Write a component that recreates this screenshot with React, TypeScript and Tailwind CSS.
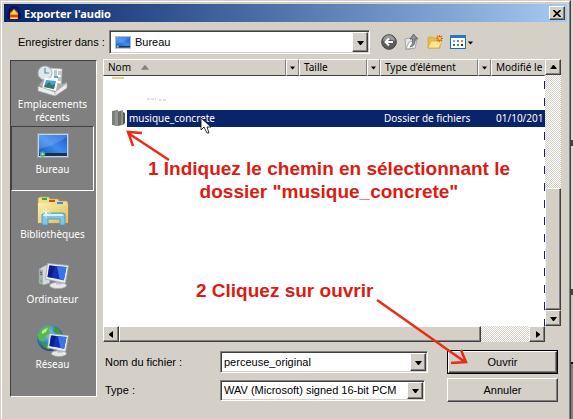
import React from 'react';

const raised =
  'bg-[#d4d0c8] border border-t-white border-l-white border-r-[#404040] border-b-[#404040] shadow-[inset_-1px_-1px_0_#808080]';
const sunken =
  'bg-white border border-t-[#808080] border-l-[#808080] border-r-white border-b-white shadow-[inset_1px_1px_0_#404040,inset_-1px_-1px_0_#d4d0c8]';
const track = 'bg-[repeating-conic-gradient(#ffffff_0_25%,#d4d0c8_0_50%)] bg-[length:2px_2px]';
const uiFont = "font-['Liberation_Sans',Arial,sans-serif] text-[11px]";
const listFont = "font-['Noto_Sans',Tahoma,sans-serif] text-[10px]";

type Direction = 'up' | 'down' | 'left' | 'right';

const trianglePaths: Record<Direction, string> = {
  up: 'M0 5h7L4 1H3z',
  down: 'M0 2h7L4 6H3z',
  left: 'M5 0v7L1 4V3z',
  right: 'M2 0v7l4-3V3z',
};

const Triangle = ({ dir, className = 'w-[7px] h-[7px]' }: { dir: Direction; className?: string }) => (
  <svg viewBox="0 0 7 7" className={className} aria-hidden="true">
    <path d={trianglePaths[dir]} fill="currentColor" />
  </svg>
);

const AudacityIcon = () => (
  <svg viewBox="0 0 14 14" className="w-[14px] h-[14px]" aria-hidden="true">
    <path d="M2 9V6a5 5 0 0 1 10 0v3" fill="none" stroke="#10105a" strokeWidth="2" />
    <path d="M0 7h3v6H1.500L0 11zM14 7h-3v6h1.500L14 11z" fill="#10105a" />
    <path d="M3 7l2-2 2-2 2 2 2 2v6H3z" fill="#f6a01c" />
    <path d="M3 9h8v2H3z" fill="#e03a18" />
    <path d="M5 7l2-3 2 3v1H5zM4 12h6v1H4z" fill="#ffe04a" />
  </svg>
);

const DesktopIcon = ({ className }: { className: string }) => (
  <svg viewBox="0 0 32 26" className={className} aria-hidden="true">
    <defs>
      <linearGradient id="desk" x1="0" y1="1" x2="1" y2="0">
        <stop offset="0" stopColor="#1c50b4" />
        <stop offset=".5" stopColor="#3f8cec" />
        <stop offset="1" stopColor="#2058cc" />
      </linearGradient>
    </defs>
    <rect x=".5" y=".5" width="31" height="24" fill="#c9d2dd" stroke="#8f9cab" />
    <rect x="2" y="2" width="28" height="21" fill="url(#desk)" />
    <path d="M2 16Q16 13 30 4V2H2z" fill="#8cc4fa" opacity=".3" />
    <rect x="2" y="20" width="28" height="3" fill="#1c2f50" />
    <circle cx="5.500" cy="21" r="2.800" fill="#3aa0a8" />
    <circle cx="5.500" cy="21" r="1.200" fill="#e5d65c" />
  </svg>
);

const RecentIcon = () => (
  <svg viewBox="0 0 32 32" className="w-8 h-8" aria-hidden="true">
    <path d="M12 3l13 1-1 17H11z" fill="#f5f7f7" stroke="#aab2b5" strokeWidth=".7" />
    <circle cx="8" cy="8" r="7" fill="#dbe8ec" stroke="#9fb0b6" />
    <path d="M8 3v5h4" fill="none" stroke="#6b8793" strokeWidth="1.200" />
    <path d="M17 6h3M17 8h3M17 10h3M21 7h3M21 9h3M21 13h3M21 15h3" stroke="#87969d" />
    <path d="M17 11h4v2h-4z" fill="#66a8be" />
    <path d="M2 20l4-5 19 4 5-2-5 10-15-2z" fill="#a9aeb0" />
    <path d="M8 13l13 1-2 12L5 23z" fill="#fff" />
    <path d="M9 15l10 1-2 8-10-2z" fill="#47a4d8" />
    <path d="M8 20l4-3 3 3 3-1-1 5-10-2z" fill="#327a68" />
    <path d="M1 21l17 6 12-9v5L18 31 1 26z" fill="#eceeee" stroke="#a0a4a5" strokeWidth=".7" />
    <path d="M18 27v4" stroke="#b9bdbe" />
  </svg>
);

const LibrariesIcon = () => (
  <svg viewBox="0 0 32 32" className="w-8 h-8" aria-hidden="true">
    <defs>
      <linearGradient id="lib" x1="0" y1="0" x2="1" y2="1">
        <stop offset="0" stopColor="#fbf0ae" />
        <stop offset="1" stopColor="#dfbd58" />
      </linearGradient>
    </defs>
    <path d="M1 5V3l2-1h9l1 2h8l1 2h8l1 2v20H1z" fill="#f0dc8c" stroke="#b79a42" strokeWidth=".7" />
    <path d="M5 3h5v2H5z" fill="#2fae3f" />
    <path d="M12 5h6v2h-6z" fill="#cf4a28" />
    <path d="M20 7h6v2h-6z" fill="#3194d8" />
    <path d="M1 8h13l2 2h15v18H1z" fill="url(#lib)" />
    <path d="M5 30V20q0-2 2-2h19q2 0 2 2v10h-5v-6H11v6z" fill="#7cc6ea" stroke="#4493c0" strokeWidth=".8" />
    <path d="M6 21l2-2h17l2 2z" fill="#d4f1fc" />
    <path d="M9 13v10M4 18h10M6 15l6 6M12 15l-6 6" stroke="#fff" strokeWidth=".7" />
  </svg>
);

const Monitor = () => (
  <g>
    <ellipse cx="21" cy="28" rx="8" ry="3" fill="#e6e9ea" stroke="#a3a8aa" strokeWidth=".6" />
    <path d="M19 22h6v5h-6z" fill="#b8bec2" />
    <path d="M11 7l20 2-3 17-19-4z" fill="#e8ecee" stroke="#9fa7ad" strokeWidth=".7" />
    <path d="M12.500 9L29 10.500 26.500 23 11 20z" fill="#1530b4" />
    <path d="M20 10l9 .5L26.500 23l-4-1z" fill="#3c74e8" />
    <path d="M13 9l5 .5-3 11-4-.5z" fill="#0b1c8c" />
  </g>
);

const ComputerIcon = () => (
  <svg viewBox="0 0 32 32" className="w-8 h-8" aria-hidden="true">
    <path d="M2 9l7-4h4v18l-6 2-5-2z" fill="#d4d8da" stroke="#8f9699" strokeWidth=".7" />
    <path d="M2 9l4 1v15l-4-2z" fill="#a8aeb1" />
    <path d="M3 12l2 .5M3 14l2 .5" stroke="#4f5558" />
    <path d="M3 20h2v2H3z" fill="#5fc44a" />
    <g transform="translate(-1 -4) scale(1.050)">
      <Monitor />
    </g>
  </svg>
);

const NetworkIcon = () => (
  <svg viewBox="0 0 32 32" className="w-8 h-8" aria-hidden="true">
    <defs>
      <radialGradient id="globe" cx=".4" cy=".3" r=".7">
        <stop offset="0" stopColor="#8fd4f4" />
        <stop offset=".5" stopColor="#3a8ccc" />
        <stop offset="1" stopColor="#17437c" />
      </radialGradient>
    </defs>
    <circle cx="13" cy="13" r="13" fill="url(#globe)" />
    <path d="M3 6q5-6 11-5l-2 4 2 3-5 3-3 6-4-2-2-5z" fill="#58b848" />
    <path d="M17 2q6 2 8 8l-5-1-4-3zM4 17l6 2 2 6q-6-2-8-8z" fill="#3f9a3c" />
    <path d="M5 6q3-3 6-3l-2 4-4 2z" fill="#b7ec8a" />
    <g transform="translate(2 2) scale(.95)">
      <Monitor />
    </g>
  </svg>
);

const BackIcon = () => (
  <svg viewBox="0 0 16 16" className="w-4 h-4" aria-hidden="true">
    <circle cx="8" cy="8" r="7.300" fill="#5c5c5c" stroke="#444" />
    <path d="M2 7a6 6 0 0 1 12 0q-6-3-12 0z" fill="#9a9a9a" />
    <path d="M12 8H5M8 4.500L4.500 8 8 11.500" fill="none" stroke="#fff" strokeWidth="2" />
  </svg>
);

const UpIcon = () => (
  <svg viewBox="0 0 16 16" className="w-4 h-4" aria-hidden="true">
    <path d="M1 5l4-1 1 1 5-1v10l-9 2z" fill="#e6e6e6" stroke="#999" strokeWidth=".8" />
    <path d="M2 15l3-7 8-2-2 8z" fill="#f8f8f8" stroke="#999" strokeWidth=".8" />
    <path d="M6 13q6-1 5-8h3L9.500 0 6 5h2.500q1 5-2.500 8z" fill="#8a8f92" stroke="#555" strokeWidth=".7" />
  </svg>
);

const NewFolderIcon = () => (
  <svg viewBox="0 0 16 16" className="w-4 h-4" aria-hidden="true">
    <path d="M1 14V4l1-1h4l1 1h6v10z" fill="#e8bd4c" stroke="#c79629" strokeWidth=".6" />
    <path d="M1 14l3-7h11l-3 7z" fill="#ffe68c" stroke="#d2a038" strokeWidth=".6" />
    <path d="M12.500 1v7M9 4.500h7M10 2l5 5M15 2l-5 5" stroke="#ee5a24" strokeWidth="1.200" />
    <circle cx="12.500" cy="4.500" r="1.400" fill="#ffd24a" />
  </svg>
);

const ViewIcon = () => (
  <svg viewBox="0 0 16 14" className="w-4 h-[14px]" aria-hidden="true">
    <rect x=".5" y=".5" width="15" height="13" fill="#fff" stroke="#2268b8" />
    <path d="M0 0h16v3H0z" fill="#2a76cc" />
    <path d="M3 5h2v2H3z" fill="#9aa8b4" />
    <path d="M7 5h2v2H7z" fill="#4c8ed4" />
    <path d="M11 5h2v2h-2z" fill="#e07c40" />
    <path d="M3 9h2v2H3z" fill="#2a6ab8" />
    <path d="M7 9h2v2H7z" fill="#3a9a50" />
    <path d="M11 9h2v2h-2z" fill="#333" />
  </svg>
);

const FolderIcon = () => (
  <svg viewBox="0 0 15 17" className="w-[15px] h-[17px] shrink-0" aria-hidden="true">
    <path d="M1 1l6-1v16l-6-1z" fill="#7c8079" />
    <path d="M4 2l8-2v15l-8 1z" fill="#8f948c" />
    <path d="M7 2l3-1v14l-3 1z" fill="#6b706a" />
    <path d="M12 2l2 1v10l-2 2z" fill="#55594f" />
  </svg>
);

const places = [
  { label: 'Emplacements récents', icon: <RecentIcon /> },
  {
    label: 'Bureau',
    icon: (
      <span className="flex h-8 items-center">
        <DesktopIcon className="w-8 h-[26px]" />
      </span>
    ),
    selected: true,
  },
  { label: 'Bibliothèques', icon: <LibrariesIcon /> },
  { label: 'Ordinateur', icon: <ComputerIcon /> },
  { label: 'Réseau', icon: <NetworkIcon /> },
];

const columns = [
  { title: 'Nom', sorted: true },
  { title: 'Taille' },
  { title: 'Type d’élément' },
  { title: 'Modifié le', last: true },
];

const TitleBar = () => (
  <header className="flex h-[18px] items-center gap-[3px] bg-linear-to-r from-[#0a246a] to-[#a6caf0] pl-[3px] pr-0.5">
    <AudacityIcon />
    <h1 className="flex-1 font-['Noto_Sans',Tahoma,sans-serif] text-[11px] leading-none font-bold text-white">
      Exporter l'audio
    </h1>
    <button aria-label="Fermer" className={`flex h-[14px] w-4 items-center justify-center ${raised}`}>
      <svg viewBox="0 0 8 7" className="h-[7px] w-2" aria-hidden="true">
        <path d="M.5 0l7 7M7.500 0l-7 7" stroke="#000" strokeWidth="1.600" />
      </svg>
    </button>
  </header>
);

const LookIn = () => (
  <div className={`flex items-center pl-3.5 pt-2 pb-[5px] ${uiFont}`}>
    <label htmlFor="look-in" className="w-[91px] shrink-0 whitespace-nowrap">
      Enregistrer dans :
    </label>
    <div className={`relative flex h-6 flex-1 ${sunken}`}>
      <span className="pointer-events-none absolute left-[5px] top-[5px]">
        <DesktopIcon className="w-4 h-[13px]" />
      </span>
      <select id="look-in" className="w-full appearance-none pl-[25px] outline-none">
        <option>Bureau</option>
      </select>
      <span className={`pointer-events-none absolute inset-y-px right-px flex w-4 items-center justify-center ${raised}`}>
        <Triangle dir="down" />
      </span>
    </div>
    <div className="flex w-[197px] items-center gap-[7px] pl-[11px]">
      <button aria-label="Précédent"><BackIcon /></button>
      <button aria-label="Dossier parent"><UpIcon /></button>
      <button aria-label="Nouveau dossier"><NewFolderIcon /></button>
      <button aria-label="Affichage" className="flex items-center gap-0.5">
        <ViewIcon />
        <Triangle dir="down" className="h-[5px] w-[5px]" />
      </button>
    </div>
  </div>
);

const Places = () => (
  <nav
    className={`mt-px h-[337px] w-[87px] shrink-0 border border-t-[#404040] border-l-[#404040] border-r-white border-b-white bg-[#808080] pr-0.5 text-white ${listFont}`}
  >
    {places.map((p) => (
      <button
        key={p.label}
        className={`flex h-[65px] w-full flex-col items-center border px-1 pt-[3px] leading-[13px] ${
          p.selected ? 'border-t-[#404040] border-l-[#404040] border-r-white border-b-white' : 'border-transparent'
        }`}
      >
        {p.icon}
        <span className="mt-px">{p.label}</span>
      </button>
    ))}
  </nav>
);

const FileList = () => (
  <div className="flex">
    <div className="min-w-0 flex-1">
      <div className="h-[267px] overflow-hidden bg-white bg-[repeating-linear-gradient(to_bottom,#ffffff_0_5px,#1c2460_5px_13px,#ffffff_13px_17px)] bg-[length:1px_250px] bg-[position:right_17px] bg-no-repeat">
        <table className={`w-full table-fixed border-collapse ${listFont}`}>
          <colgroup>
            <col className="w-[196px]" />
            <col className="w-[81px]" />
            <col className="w-[111px]" />
            <col />
          </colgroup>
          <thead>
            <tr>
              {columns.map((c) => (
                <th key={c.title} className="p-0 text-left font-normal">
                  <div className="flex h-[17px] bg-[#d4d0c8] leading-[15px] whitespace-nowrap">
                    <span
                      className={`flex min-w-0 flex-1 items-center gap-2.5 border border-t-white border-l-white border-b-[#404040] pl-1 ${
                        c.last ? 'border-r-transparent' : 'border-r-[#808080]'
                      }`}
                    >
                      {c.title}
                      {c.sorted && <Triangle dir="up" className="h-2 w-2 text-[#808080]" />}
                    </span>
                    {!c.last && (
                      <button
                        aria-label={`Filtrer ${c.title}`}
                        className="flex w-[13px] items-center justify-center border border-t-white border-l-white border-r-[#808080] border-b-[#404040]"
                      >
                        <Triangle dir="down" className="h-[5px] w-[5px]" />
                      </button>
                    )}
                  </div>
                </th>
              ))}
            </tr>
          </thead>
          <tbody>
            <tr className="h-[34px]">
              <td colSpan={4} className="p-0" />
            </tr>
            <tr className="h-[17px] leading-[17px] whitespace-nowrap text-white">
              <td className="p-0">
                <div className="flex pl-2">
                  <FolderIcon />
                  <span className="ml-px flex-1 bg-[#0a246a] pl-0.5">musique_concrete</span>
                </div>
              </td>
              <td className="bg-[#0a246a] p-0" />
              <td className="bg-[#0a246a] p-0 pl-1">Dossier de fichiers</td>
              <td className="bg-[#0a246a] p-0 pl-[5px]">01/10/201</td>
            </tr>
          </tbody>
        </table>
      </div>
      <div className={`flex h-4 ${track}`}>
        <button aria-label="Défiler à gauche" className={`flex w-4 items-center justify-center ${raised}`}>
          <Triangle dir="left" />
        </button>
        <div className={`w-[362px] ${raised}`} />
        <button aria-label="Défiler à droite" className={`ml-auto flex w-4 items-center justify-center ${raised}`}>
          <Triangle dir="right" />
        </button>
      </div>
    </div>
    <div className={`flex h-[267px] w-4 flex-col ${track}`}>
      <button aria-label="Défiler en haut" className={`flex h-4 items-center justify-center ${raised}`}>
        <Triangle dir="up" />
      </button>
      <div className={`mt-auto h-[122px] ${raised}`} />
      <button aria-label="Défiler en bas" className={`flex h-4 items-center justify-center ${raised}`}>
        <Triangle dir="down" />
      </button>
    </div>
  </div>
);

const FileForm = () => (
  <form
    onSubmit={(e) => e.preventDefault()}
    className={`grid grid-cols-[115px_1fr_111px] items-center gap-y-1 pt-2 pr-[3px] pl-0.5 ${uiFont}`}
  >
    <label htmlFor="file-name">Nom du fichier :</label>
    <div className={`mr-[19px] flex h-[22px] p-px ${sunken}`}>
      <input id="file-name" defaultValue="perceuse_original" className="min-w-0 flex-1 bg-transparent pl-0.5 outline-none" />
      <button type="button" aria-label="Noms récents" className={`flex w-4 items-center justify-center ${raised}`}>
        <Triangle dir="down" />
      </button>
    </div>
    <button type="submit" className="h-6 border border-black">
      <span className={`flex h-full items-center justify-center ${raised}`}>Ouvrir</span>
    </button>

    <label htmlFor="file-type">Type :</label>
    <div className={`relative mr-[22px] flex h-[21px] ${sunken}`}>
      <select id="file-type" className="w-full appearance-none pl-[3px] outline-none">
        <option>WAV (Microsoft) signed 16-bit PCM</option>
      </select>
      <span className={`pointer-events-none absolute inset-y-px right-px flex w-4 items-center justify-center ${raised}`}>
        <Triangle dir="down" />
      </span>
    </div>
    <button type="button" className={`h-6 ${raised}`}>
      Annuler
    </button>
  </form>
);

// Instructions drawn over the dialog
const Annotations = () => (
  <div className="pointer-events-none absolute inset-0 font-['Liberation_Sans',Arial,sans-serif] text-[19px] leading-[23px] font-bold text-[#dc1c12]">
    <p className="absolute left-[128px] top-[156px] w-[400px] text-center whitespace-nowrap">
      1 Indiquez le chemin en sélectionnant le
      <br />
      dossier "musique_concrete"
    </p>
    <p className="absolute left-[195px] top-[278px] whitespace-nowrap">2 Cliquez sur ouvrir</p>
    <svg viewBox="0 0 571 419" className="absolute left-0 top-0 h-[419px] w-[571px]" aria-hidden="true">
      <g fill="none" stroke="#ee2a16" strokeWidth="2.500">
        <path d="M168 159L127 132M141 132l-14-1 5 14" />
        <path d="M376 299l88 62M460 349l5 12-15 1" />
      </g>
      <path d="M111 77h12" stroke="#ead27c" strokeWidth="2" />
      <path d="M146 98h9M158 99h8" stroke="#c4c4c4" strokeDasharray="3 1" />
      <path d="M200 117v12l3-3 3 6h2l-2-6h4z" fill="#fff" stroke="#000" strokeWidth=".8" />
    </svg>
  </div>
);

const App = () => (
  <div className="flex min-h-screen bg-[#d4d0c8] text-black">
    <main className="relative flex min-w-0 flex-1 overflow-hidden border-t border-l border-r border-t-[#d4d0c8] border-l-[#d4d0c8] border-r-[#404040]">
      <div className="min-w-0 flex-1 border-t border-l border-r border-t-white border-l-white border-r-[#808080] px-0.5 pt-0.5">
        <TitleBar />
        <LookIn />
        <div className="flex gap-1.5 px-1.5">
          <Places />
          <div className="min-w-0 flex-1">
            <FileList />
            <FileForm />
          </div>
        </div>
      </div>
      <Annotations />
    </main>
    <div className="w-0.5 bg-[linear-gradient(#d8d8d8_0_140px,#444_140px_146px,#d8d8d8_146px_289px,#444_289px_295px,#c8c8c8_295px_362px,#111_362px_364px,#808080_364px)]" />
  </div>
);

export default App;
